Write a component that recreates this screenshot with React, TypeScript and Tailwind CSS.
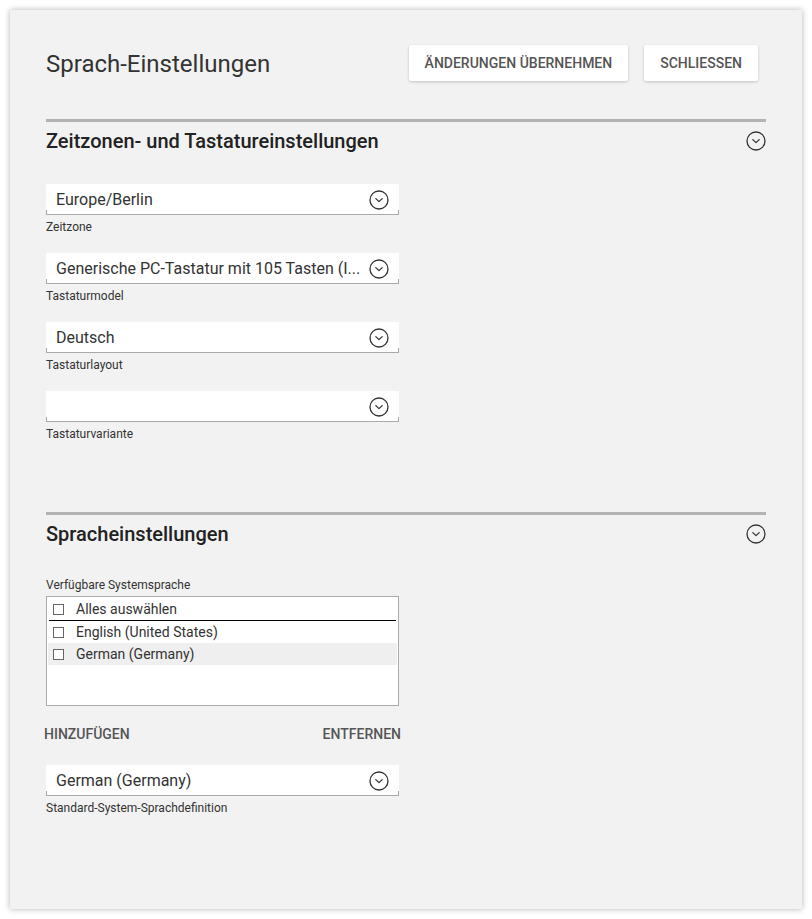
import React from "react";

const Chevron = ({ size = 20 }: { size?: number }) => (
    <svg width={size} height={size} viewBox="0 0 20 20" fill="none">
        <circle cx="10" cy="10" r="9" stroke="#333" strokeWidth="1.3" />
        <path d="M6.8 8.6 L10 11.6 L13.2 8.6" stroke="#333" strokeWidth="1.3" strokeLinecap="round" strokeLinejoin="round" />
    </svg>
);

const SelectField = ({ value, label }: { value: string; label: string }) => (
    <div className="w-[353px]">
        <div className="relative h-[31px] bg-white flex items-center pl-2.5 pr-[10px]">
            <span className="flex-1 whitespace-nowrap text-[16px] text-[#333] pr-2">{value}</span>
            <Chevron />
            <div className="absolute left-0 right-0 bottom-0 h-[5px] border-x border-b border-[#a9a9a9]" />
        </div>
        <div className="mt-1 text-[12px] leading-4 text-[#333]">{label}</div>
    </div>
);

const SectionHeader = ({ title }: { title: string }) => (
    <div>
        <div className="h-[3px] bg-[#b3b3b3]" />
        <div className="h-[38px] flex items-center justify-between">
            <h2 className="text-[20px] font-medium text-[#222]">{title}</h2>
            <Chevron size={20} />
        </div>
    </div>
);

const Checkbox = () => <span className="inline-block w-[11px] h-[11px] border-[1.5px] border-[#666] bg-white" />;

export default function App() {
    const languages = ["English (United States)", "German (Germany)"];

    return (
        <div className="min-h-screen bg-white p-[10px]" style={{ fontFamily: "Roboto, 'Noto Sans', sans-serif" }}>
            <div className="w-[792px] h-[899px] bg-[#f2f2f2] shadow-[0_0_6px_rgba(0,0,0,0.3)] px-9 pt-[35px]">
                <div className="flex items-center justify-between h-9">
                    <h1 className="text-[24px] text-[#333] pt-0.5">Sprach-Einstellungen</h1>
                    <div className="flex gap-4 mr-2">
                        <button className="h-9 px-4 bg-white rounded-[2px] shadow-[0_1px_3px_rgba(0,0,0,0.2)] text-[14px] font-medium text-[#555] uppercase">
                            Änderungen übernehmen
                        </button>
                        <button className="h-9 px-4 bg-white rounded-[2px] shadow-[0_1px_3px_rgba(0,0,0,0.2)] text-[14px] font-medium text-[#555] uppercase">
                            Schliessen
                        </button>
                    </div>
                </div>

                <div className="mt-[38px]">
                    <SectionHeader title="Zeitzonen- und Tastatureinstellungen" />
                    <div className="mt-[24px] flex flex-col gap-[18px]">
                        <SelectField value="Europe/Berlin" label="Zeitzone" />
                        <SelectField value="Generische PC-Tastatur mit 105 Tasten (I..." label="Tastaturmodel" />
                        <SelectField value="Deutsch" label="Tastaturlayout" />
                        <SelectField value="" label="Tastaturvariante" />
                    </div>
                </div>

                <div className="mt-[70px]">
                    <SectionHeader title="Spracheinstellungen" />
                    <div className="mt-[24px] text-[12px] leading-4 text-[#333]">Verfügbare Systemsprache</div>
                    <div className="mt-[3px] w-[353px] h-[110px] bg-white border border-[#aaa] pt-px px-px">
                        <div className="h-[22px] flex items-center gap-3 pl-[5px] text-[14px] text-[#333]">
                            <Checkbox />
                            <span>Alles auswählen</span>
                        </div>
                        <div className="h-px bg-black mx-px" />
                        {languages.map((lang, i) => (
                            <div
                                key={lang}
                                className={`h-[22px] flex items-center gap-3 pl-[5px] text-[14px] text-[#333] ${i === 1 ? "bg-[#efefef]" : ""}`}
                            >
                                <Checkbox />
                                <span>{lang}</span>
                            </div>
                        ))}
                    </div>
                    <div className="w-[357px] -ml-0.5 mt-[18px] flex justify-between">
                        <button className="text-[14px] font-medium text-[#555] uppercase">Hinzufügen</button>
                        <button className="text-[14px] font-medium text-[#555] uppercase">Entfernen</button>
                    </div>
                    <div className="mt-[20px]">
                        <SelectField value="German (Germany)" label="Standard-System-Sprachdefinition" />
                    </div>
                </div>
            </div>
        </div>
    );
}
